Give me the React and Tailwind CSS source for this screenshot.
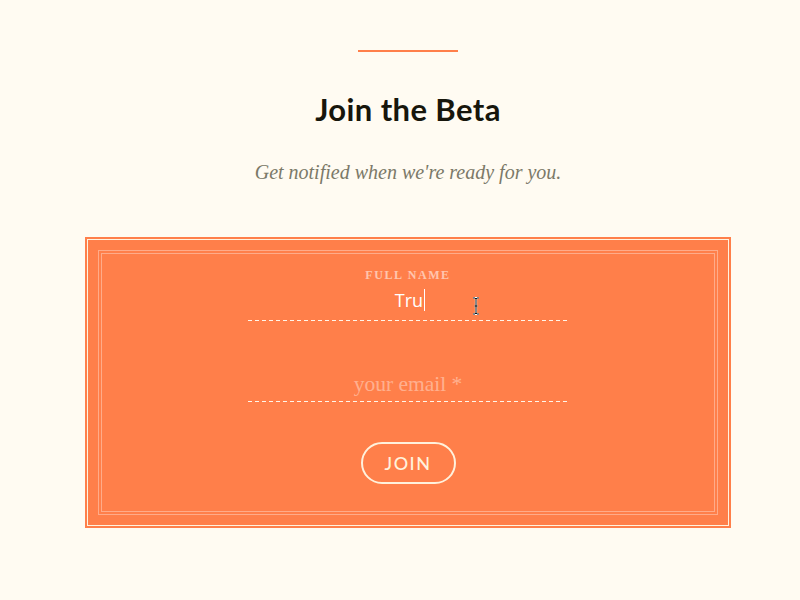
export default function App() {
  return (
    <div className="min-h-[600px] w-full bg-[#fffbf2] flex flex-col items-center pt-[50px] pl-[16px]">
      <div className="w-[100px] h-[2px] bg-[#ff7f4a]" />
      <h1
        className="mt-[39px] text-[31px] leading-[36px] font-bold text-[#17160c] tracking-[0.4px]"
        style={{ fontFamily: "Lato, 'Open Sans', sans-serif" }}
      >
        Join the Beta
      </h1>
      <p
        className="mt-[33px] text-[20px] leading-[25px] italic text-[#7b7968]"
        style={{ fontFamily: "'Liberation Serif', 'DejaVu Serif', serif" }}
      >
        Get notified when we're ready for you.
      </p>

      <div className="mt-[52px] w-[646px] bg-[#ff7f4a] p-[2px]">
        <div className="border border-[#fff3e0] p-[10px]">
          <div className="border border-white/35 p-[2px]">
            <div className="relative border border-white/35 h-[259px] flex flex-col items-center">
              <label
                className="mt-[14px] text-[12px] leading-[14px] font-bold tracking-[1.6px] text-white/55"
                style={{ fontFamily: "'Liberation Serif', 'DejaVu Serif', serif" }}
              >
                FULL NAME
              </label>
              <div className="mt-[6px] w-[320px] pb-[9px] flex justify-center relative">
                <div
                  className="h-[24px] text-[18px] leading-[24px] text-white flex items-center pl-[4px]"
                  style={{ fontFamily: "'Open Sans', sans-serif" }}
                >
                  Tru
                  <span className="ml-[1px] w-[1px] h-[22px] bg-white" />
                </div>
                <div className="absolute left-0 right-0 bottom-0 h-[1px] bg-[linear-gradient(to_right,#fff6ea_4px,transparent_4px)] bg-[length:7px_1px]" />
              </div>

              <div className="mt-[50px] w-[320px] pb-[5px] flex justify-center relative">
                <div
                  className="h-[26px] text-[21.5px] leading-[26px] text-white/40"
                  style={{ fontFamily: "'Liberation Serif', 'DejaVu Serif', serif" }}
                >
                  your email *
                </div>
                <div className="absolute left-0 right-0 bottom-0 h-[1px] bg-[linear-gradient(to_right,#fff6ea_4px,transparent_4px)] bg-[length:7px_1px]" />
              </div>

              <button
                className="mt-[40px] w-[95px] h-[42px] rounded-full border-2 border-[#fff1dc] text-[#fff1dc] text-[18px] font-medium tracking-[1.5px]"
                style={{ fontFamily: "Lato, 'Open Sans', sans-serif" }}
              >
                JOIN
              </button>

              <svg
                className="absolute left-[370px] top-[43px]"
                width="8"
                height="18"
                viewBox="0 0 8 18"
              >
                <path
                  d="M1 1h2l1 1 1-1h2M4 2v14M1 17h2l1-1 1 1h2M2.5 9h3"
                  fill="none"
                  stroke="#ffffff"
                  strokeWidth="2.2"
                />
                <path
                  d="M1 1h2l1 1 1-1h2M4 2v14M1 17h2l1-1 1 1h2M2.5 9h3"
                  fill="none"
                  stroke="#111"
                  strokeWidth="1"
                />
              </svg>
            </div>
          </div>
        </div>
      </div>
    </div>
  );
}
